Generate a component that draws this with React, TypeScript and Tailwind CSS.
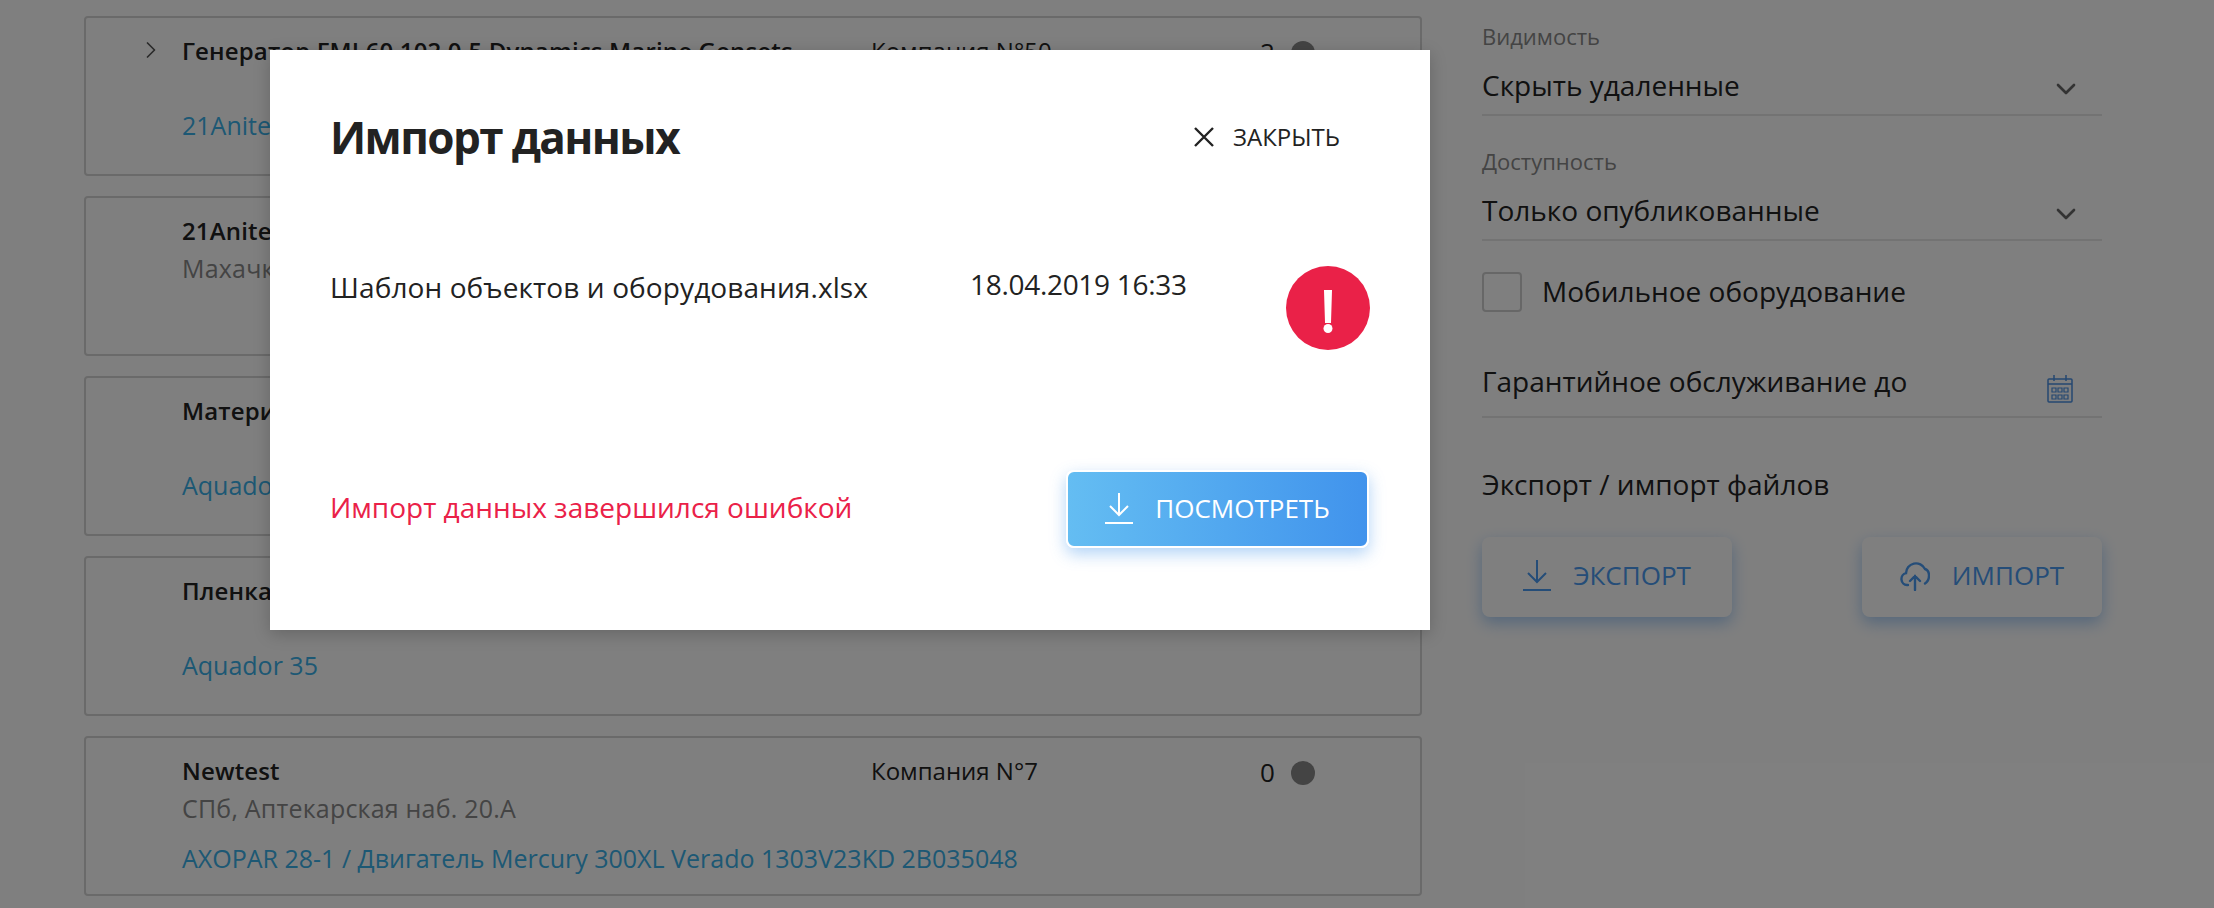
import { ChevronRight, ChevronDown } from 'lucide-react';

const cards = [
  { title: 'Генератор FMI 60 102 0.5 Dynamics Marine Gensets', address: '', link: '21Anitek', company: 'Компания N°50', count: 2 },
  { title: '21Anitek', address: 'Махачкала', link: '', company: '', count: 0 },
  { title: 'Материал', address: '', link: 'Aquador 35', company: '', count: 0 },
  { title: 'Пленка', address: '', link: 'Aquador 35', company: '', count: 0 },
  { title: 'Newtest', address: 'СПб, Аптекарская наб. 20.А', link: 'AXOPAR 28-1 / Двигатель Mercury 300XL Verado 1303V23KD 2B035048', company: 'Компания N°7', count: 0 },
];

function DownloadIcon({ className }: { className: string }) {
  return (
    <svg viewBox="0 0 28 31" fill="none" stroke="currentColor" strokeWidth="2" className={className}>
      <path d="M14 0v22M5 13l9 9 9-9M0 30h28" />
    </svg>
  );
}

function CloudIcon({ className }: { className: string }) {
  return (
    <svg viewBox="0 0 30 30" fill="none" stroke="currentColor" strokeWidth="2.4" strokeLinecap="round" className={className}>
      <path d="M8 24H7a6 6 0 0 1-1-11.8A10 10 0 0 1 25 8c3 1 4 4 4 6.5 0 3-1 6-4 8" />
      <path d="M15 29V15M10 20l5-5 5 5" />
    </svg>
  );
}

function CalendarIcon({ className }: { className: string }) {
  return (
    <svg viewBox="0 0 26 28" fill="none" stroke="currentColor" strokeWidth="1.5" className={className}>
      <rect x="1" y="4" width="24" height="23" rx="1" />
      <path d="M1 9h24M7 0v6M19 0v6" />
      <path d="M5 13h4v4H5zM11 13h4v4h-4zM17 13h4v4h-4zM5 20h4v4H5zM11 20h4v4h-4zM17 20h4v4h-4z" strokeWidth="1.2" />
    </svg>
  );
}

function Card({ title, address, link, company, count, arrow }: { title: string; address: string; link: string; company: string; count: number; arrow: boolean }) {
  return (
    <div className="h-[160px] shrink-0 rounded border-2 border-[#d4d4d4] pt-[15px]">
      <div className="flex h-9 items-center">
        <div className="flex w-[96px] justify-end pr-[17px]">
          {arrow && <ChevronRight className="mb-[2px] h-7 w-7 text-[#555]" strokeWidth={1.5} />}
        </div>
        <div className="w-[689px] truncate text-[24px] font-semibold tracking-[0.15px] text-[#222]">{title}</div>
        <div className="w-[389px] text-[24px] text-[#222]">{company}</div>
        <div className="mt-[3px] w-[30px] text-[26px] text-[#222]">{count}</div>
        <div className="ml-[1px] mt-1 h-6 w-6 rounded-full bg-[#888]"></div>
      </div>
      {address && <div className="mt-[1px] h-9 pl-[96px] text-[25px] leading-9 tracking-[0.2px] text-[#888]">{address}</div>}
      {link && <div className={`h-9 pl-[96px] text-[25px] leading-9 text-[#3ab0e8] ${address ? 'mt-[14px]' : 'mt-[38px]'}`}>{link}</div>}
    </div>
  );
}

function SelectRow({ label, value }: { label: string; value: string }) {
  return (
    <div>
      <div className="h-6 text-[22px] leading-6 text-[#888]">{label}</div>
      <div className="mt-[11px] flex h-[57px] items-center justify-between border-b-2 border-[#e6e6e6] pr-5 text-[28px] text-[#222]">
        <span className="mb-[3px]">{value}</span>
        <ChevronDown className="mt-1 h-8 w-8 text-[#666]" strokeWidth={2} />
      </div>
    </div>
  );
}

export default function App() {
  return (
    <div className="relative flex h-[908px] overflow-hidden bg-white [font-family:'Open_Sans',sans-serif]">
      <div className="ml-[84px] flex w-[1338px] flex-col gap-5 pt-4">
        {cards.map((c, i) => (
          <Card key={i} {...c} arrow={i === 0} />
        ))}
      </div>

      <div className="ml-[60px] flex w-[620px] flex-col pt-6">
        <SelectRow label="Видимость" value="Скрыть удаленные" />
        <div className="mt-[33px]">
          <SelectRow label="Доступность" value="Только опубликованные" />
        </div>
        <div className="mt-[29px] flex items-center">
          <div className="h-10 w-10 rounded border-2 border-[#cfcfcf]"></div>
          <span className="mb-[2px] ml-[20px] text-[28px] text-[#222]">Мобильное оборудование</span>
        </div>
        <div className="mt-[37px] flex h-[67px] items-center justify-between border-b-2 border-[#e6e6e6] pr-[29px] text-[28px] text-[#222]">
          <span className="mb-[5px]">Гарантийное обслуживание до</span>
          <CalendarIcon className="mt-[10px] h-7 w-[26px] text-[#4a90e2]" />
        </div>
        <div className="mt-12 text-[28px] leading-9 text-[#222]">Экспорт / импорт файлов</div>
        <div className="mt-[35px] flex justify-between">
          <button className="flex h-20 w-[250px] items-center justify-center gap-[22px] rounded-lg bg-white pb-[3px] text-[26px] text-[#4a9af0] shadow-[0_6px_16px_rgba(66,147,236,0.45)]">
            <DownloadIcon className="h-[31px] w-7" />
            ЭКСПОРТ
          </button>
          <button className="flex h-20 w-[240px] items-center justify-center gap-[22px] rounded-lg bg-white pb-[3px] text-[26px] text-[#4a9af0] shadow-[0_6px_16px_rgba(66,147,236,0.45)]">
            <CloudIcon className="h-[30px] w-[30px]" />
            ИМПОРТ
          </button>
        </div>
      </div>

      <div className="absolute inset-0 bg-black/50"></div>

      <div className="absolute left-[270px] top-[50px] flex h-[580px] w-[1160px] flex-col bg-white px-[60px] shadow-[0_4px_16px_rgba(0,0,0,0.2)]">
        <div className="mt-[52px] flex h-[70px] items-center justify-between pr-[30px]">
          <h1 className="text-[44px] font-bold tracking-[-1.6px] text-[#222]">Импорт данных</h1>
          <div className="flex items-center gap-[19px] text-[24px] text-[#222]">
            <svg viewBox="0 0 20 20" fill="none" stroke="currentColor" strokeWidth="2.4" className="h-5 w-5">
              <path d="M1 1l18 18M19 1L1 19" />
            </svg>
            ЗАКРЫТЬ
          </div>
        </div>
        <div className="mt-[94px] flex items-start">
          <div className="mt-[3px] w-[640px] text-[28px] leading-9 tracking-[0.1px] text-[#222]">Шаблон объектов и оборудования.xlsx</div>
          <div className="w-[316px] text-[28px] leading-9 tracking-[-0.3px] text-[#222]">18.04.2019 16:33</div>
          <div className="flex h-[84px] w-[84px] items-center justify-center rounded-full bg-[#ea2148] pt-[6px]">
            <svg viewBox="0 0 10 43" fill="white" className="h-[43px] w-[10px]">
              <path d="M1 0h8l-1 33H2z" />
              <circle cx="5" cy="38.5" r="4.5" />
            </svg>
          </div>
        </div>
        <div className="mt-[120px] flex items-center justify-between pr-[1px]">
          <div className="mb-1 text-[28px] text-[#ea2148]">Импорт данных завершился ошибкой</div>
          <button className="flex h-[78px] w-[303px] items-center justify-center gap-[22px] rounded-lg border-2 border-white bg-gradient-to-r from-[#64bdf2] to-[#4193ec] pb-[2px] text-[26px] text-white shadow-[0_6px_16px_rgba(66,147,236,0.4)]">
            <DownloadIcon className="h-[31px] w-7" />
            ПОСМОТРЕТЬ
          </button>
        </div>
      </div>
    </div>
  );
}
